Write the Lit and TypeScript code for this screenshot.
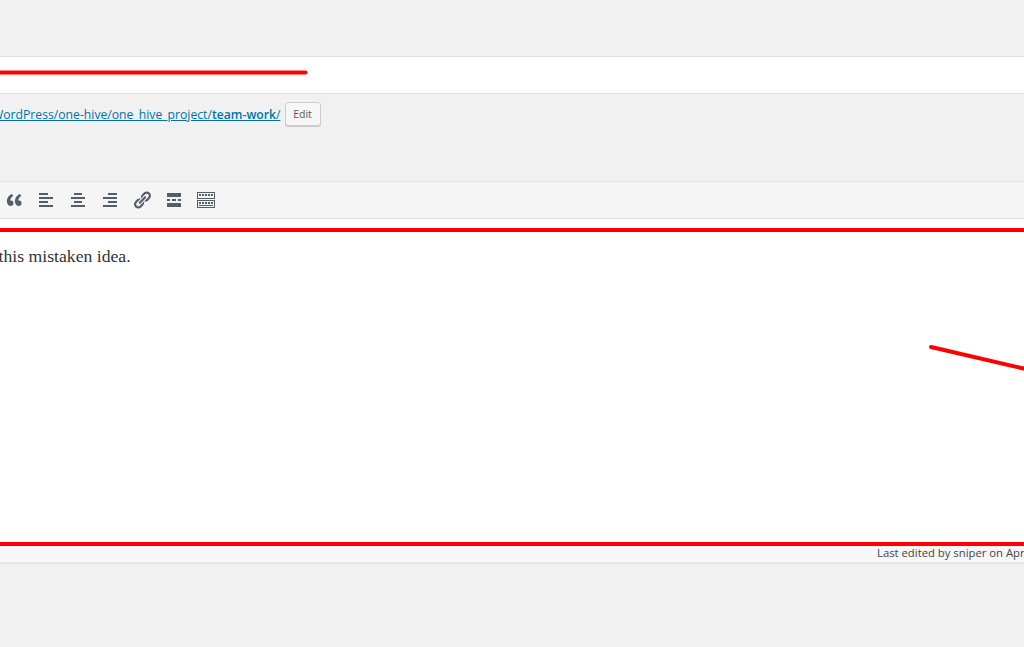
import { LitElement, html, css, svg } from "lit";
import { customElement } from "lit/decorators.js";

const P = (d: string) => html`<svg class="ic" viewBox="0 0 20 20"><path d=${d}></path></svg>`;

const icons = [
  P("M9.49 13.22c0-.74-.2-1.38-.61-1.9-.62-.78-1.83-.88-2.53-.72-.29-1.65 1.11-3.75 2.92-4.65L7.88 4c-2.73 1.3-5.42 4.28-4.96 8.05C3.21 14.43 4.59 16 6.54 16c.85 0 1.56-.25 2.12-.75s.83-1.18.83-2.03zm8.05 0c0-.74-.2-1.38-.61-1.9-.63-.78-1.83-.88-2.53-.72-.29-1.65 1.11-3.75 2.92-4.65L15.94 4c-2.73 1.3-5.42 4.28-4.96 8.05.29 2.38 1.67 3.95 3.62 3.95.85 0 1.56-.25 2.12-.75s.82-1.18.82-2.03z"),
  P("M12 5V3H3v2h9zm5 4V7H3v2h14zm-5 4v-2H3v2h9zm5 4v-2H3v2h14z"),
  P("M14 5V3H6v2h8zm3 4V7H3v2h14zm-3 4v-2H6v2h8zm3 4v-2H3v2h14z"),
  P("M17 5V3H8v2h9zm0 4V7H3v2h14zm0 4v-2H8v2h9zm0 4v-2H3v2h14z"),
  P("M17.74 2.76c1.68 1.69 1.68 4.41 0 6.1l-1.53 1.52c-1.12 1.12-2.7 1.47-4.14 1.09l2.62-2.61.76-.77.76-.76c.84-.84.84-2.2 0-3.04-.84-.85-2.2-.85-3.04 0l-.77.76-3.38 3.38c-.37-1.44-.02-3.02 1.1-4.14l1.52-1.53c1.69-1.68 4.42-1.68 6.1 0zM8.59 13.43l5.34-5.34c.42-.42.42-1.1 0-1.52-.44-.43-1.13-.39-1.53 0l-5.33 5.34c-.42.42-.42 1.1 0 1.52.44.43 1.13.39 1.52 0zm-.76 2.29l4.14-4.15c.38 1.44.03 3.02-1.09 4.14l-1.52 1.53c-1.69 1.68-4.41 1.68-6.1 0-1.68-1.68-1.68-4.42 0-6.1l1.53-1.52c1.12-1.12 2.7-1.47 4.14-1.1l-4.14 4.15c-.85.84-.85 2.2 0 3.05.84.84 2.2.84 3.04 0z"),
  P("M17 7V3H3v4h14zM6 11V9H3v2h3zm6 0V9H8v2h4zm5 0V9h-3v2h3zm0 6v-4H3v4h14z"),
  html`<svg class="ic" viewBox="0 0 20 20"><path fill-rule="evenodd" d="M1 2h18v7H1zM2 3v5h16V3zM3 4h2v2H3zM6 4h2v2H6zM9 4h2v2H9zM12 4h2v2h-2zM15 4h2v2h-2zM1 10h18v8H1zM2 11v6h16v-6zM3 12h2v2H3zM6 12h2v2H6zM9 12h2v2H9zM12 12h2v2h-2zM15 12h2v2h-2zM3 15h14v1H3z"></path></svg>`,
];

@customElement("app-root")
export class AppRoot extends LitElement {
  static styles = css`
    :host {
      display: block;
      position: relative;
      width: 1024px;
      height: 647px;
      overflow: hidden;
      background: #f1f1f1;
      font-family: "Open Sans", "Noto Sans", sans-serif;
    }
    .top { height: 56px; }
    .title {
      height: 36px;
      background: #fff;
      border-top: 1px solid #ddd;
      border-bottom: 1px solid #ddd;
    }
    .perma {
      height: 87px;
      box-sizing: border-box;
      padding-top: 8px;
      display: flex;
      align-items: flex-start;
      gap: 4px;
      color: #0073aa;
    }
    .perma a {
      margin-left: -8px;
      margin-top: 4px;
      line-height: 18px;
      font-size: 12.2px;
      color: #0073aa;
      text-decoration: underline;
      white-space: nowrap;
    }
    .perma b { font-weight: 600; }
    .edit {
      height: 24px;
      width: 36px;
      box-sizing: border-box;
      border: 1px solid #ccc;
      border-radius: 3px;
      background: #f7f7f7;
      box-shadow: 0 1px 0 #ccc;
      color: #555;
      font-size: 10.5px;
      display: flex;
      align-items: center;
      justify-content: center;
    }
    .toolbar {
      height: 36px;
      background: #f5f5f5;
      border-top: 1px solid #e5e5e5;
      border-bottom: 1px solid #ddd;
      display: flex;
      align-items: center;
    }
    .btns { display: flex; margin-left: -2px; }
    .btn {
      width: 32px;
      height: 36px;
      display: flex;
      align-items: center;
      justify-content: center;
    }
    .ic { width: 20px; height: 20px; fill: #555d66; display: block; }
    .editor {
      height: 323px;
      background: #fff;
      box-sizing: border-box;
      padding-top: 26px;
      overflow: hidden;
    }
    .editor p {
      margin: 0 0 0 -1.500px;
      font-family: "Liberation Serif", serif;
      font-size: 17.700px;
      line-height: 22px;
      color: #333;
      white-space: nowrap;
    }
    .status {
      height: 21px;
      box-sizing: border-box;
      background: #f7f7f7;
      border-bottom: 1px solid #e5e5e5;
      box-shadow: 0 1px 1px rgba(0,0,0,.04);
      padding: 3px 0 0 877px;
      font-size: 11.3px;
      line-height: 16px;
      color: #444;
      white-space: nowrap;
      overflow: hidden;
    }
    .marks { position: absolute; inset: 0; pointer-events: none; }
  `;

  render() {
    return html`
      <div class="top"></div>
      <div class="title"></div>
      <div class="perma">
        <a>WordPress/one-hive/one_hive_project/<b>team-work</b>/</a>
        <span class="edit">Edit</span>
      </div>
      <div class="toolbar">
        <div class="btns">${icons.map((i) => html`<div class="btn">${i}</div>`)}</div>
      </div>
      <div class="editor"><p>this mistaken idea.</p></div>
      <div class="status">Last edited by sniper on April</div>
      <svg class="marks" viewBox="0 0 1024 647" width="1024" height="647">
        ${svg`
          <g stroke="#f00" fill="none" stroke-linecap="round">
            <path d="M-5 72.500H305.500" stroke-width="4"></path>
            <path d="M-5 230H1030" stroke-width="4"></path>
            <path d="M-5 544H1030" stroke-width="4"></path>
            <path d="M931 347L1030 370" stroke-width="4"></path>
          </g>
        `}
      </svg>
    `;
  }
}
